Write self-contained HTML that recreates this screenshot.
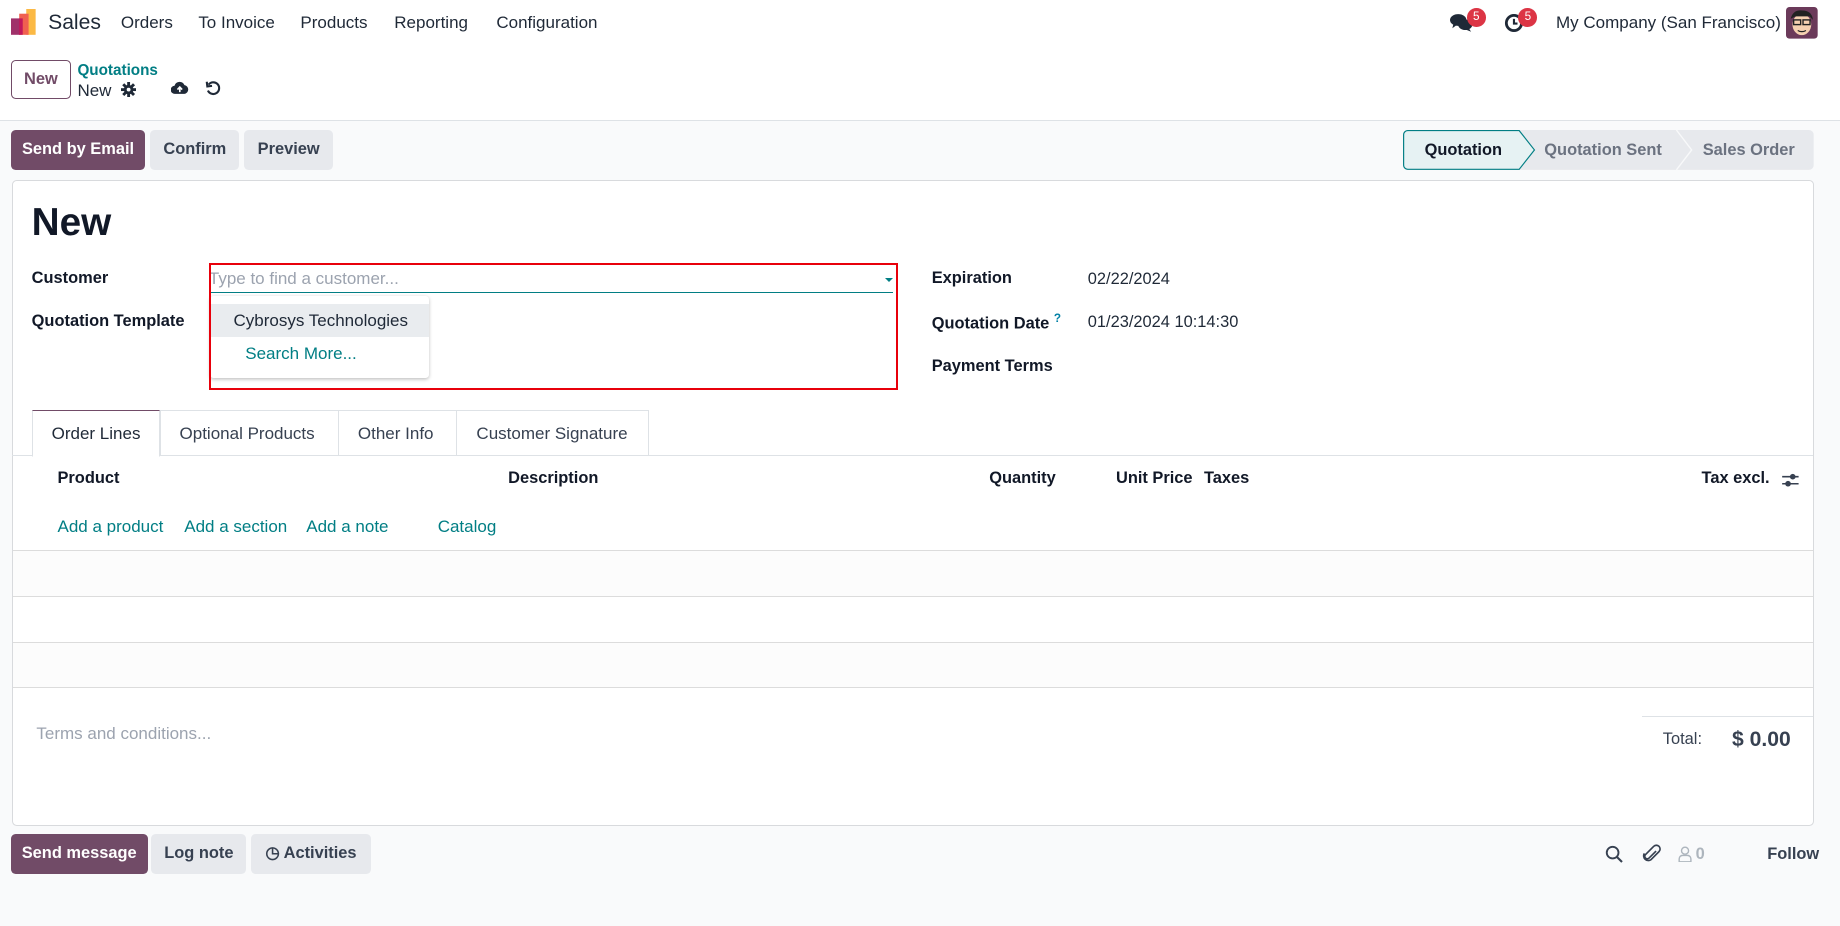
<!DOCTYPE html>
<html><head><meta charset="utf-8"><style>
html,body{margin:0;padding:0;width:1840px;height:926px;overflow:hidden;background:#f9fafb}
#w{zoom:1.173469;width:1568px;height:789px;position:relative;font-family:"Liberation Sans",sans-serif;font-size:14px;color:#1f2937}
.a{position:absolute;white-space:nowrap}
.b{font-weight:bold}
.t{color:#017e84}
.btn{position:absolute;height:34px;line-height:34px;text-align:center;border-radius:4px;font-weight:bold;font-size:14px}
.p{background:#714B67;color:#fff}
.g{background:#e7e9ed;color:#374151}
.lbl{font-weight:bold;color:#111827}
</style></head><body><div id="w">
<!-- top white area -->
<div class="a" style="left:0;top:0;width:1568px;height:102px;background:#fff;border-bottom:1px solid #dee2e6"></div>
<!-- logo -->
<svg class="a" style="left:9px;top:8px" width="22" height="22" viewBox="0 0 22 22"><rect x="13" y="0" width="8" height="22" fill="#fbb945"/><rect x="7" y="4" width="8" height="18" fill="#f06050"/><rect x="0" y="8" width="8" height="14" fill="#a0316a"/><rect x="7" y="8" width="3" height="14" fill="#c2185b"/></svg>
<div class="a" style="left:41px;top:9px;font-size:18px;color:#1f2937">Sales</div>
<div class="a" style="left:103px;top:11px;font-size:14.5px">Orders</div>
<div class="a" style="left:169px;top:11px;font-size:14.5px">To Invoice</div>
<div class="a" style="left:256px;top:11px;font-size:14.5px">Products</div>
<div class="a" style="left:336px;top:11px;font-size:14.5px">Reporting</div>
<div class="a" style="left:423px;top:11px;font-size:14.5px">Configuration</div>
<!-- chat icon -->
<svg class="a" style="left:1236px;top:11px" width="20" height="17" viewBox="0 0 20 17"><ellipse cx="7" cy="6" rx="7" ry="5" fill="#1f2937"/><path d="M3 9 L2 13 L6 10Z" fill="#1f2937"/><ellipse cx="13" cy="10" rx="6" ry="4.5" fill="#1f2937"/><path d="M16 13 L18 16 L13 14Z" fill="#1f2937"/></svg>
<div class="a" style="left:1250px;top:7px;width:16px;height:16px;border-radius:8px;background:#dc3545;color:#fff;font-size:10px;text-align:center;line-height:16px">5</div>
<svg class="a" style="left:1282px;top:11px" width="17" height="17" viewBox="0 0 17 17"><circle cx="8.5" cy="8.5" r="6.5" fill="none" stroke="#1f2937" stroke-width="2.4"/><path d="M8.5 5v4h3" fill="none" stroke="#1f2937" stroke-width="1.8"/></svg>
<div class="a" style="left:1294px;top:7px;width:16px;height:16px;border-radius:8px;background:#dc3545;color:#fff;font-size:10px;text-align:center;line-height:16px">5</div>
<div class="a" style="left:1326px;top:11px;font-size:14.5px">My Company (San Francisco)</div>
<svg class="a" style="left:1522px;top:6px" width="27" height="27" viewBox="0 0 27 27"><rect width="27" height="27" rx="3" fill="#6b3a5a"/><ellipse cx="13.5" cy="15" rx="8" ry="9" fill="#f5d0b0"/><path d="M4 10 Q6 2 14 3 Q22 3 23 11 L20 8 L8 8Z" fill="#222"/><rect x="6.5" y="11" width="6" height="4" fill="none" stroke="#222" stroke-width="1.2"/><rect x="14.5" y="11" width="6" height="4" fill="none" stroke="#222" stroke-width="1.2"/><path d="M10 20 Q13.5 22 17 20" stroke="#222" fill="none"/></svg>
<!-- control panel -->
<div class="a" style="left:9px;top:51px;width:50px;height:32px;border:1px solid #714B67;border-radius:4px;color:#714B67;font-weight:bold;text-align:center;line-height:32px;font-size:14px">New</div>
<div class="a b t" style="left:66px;top:53px;font-size:13px">Quotations</div>
<div class="a" style="left:66px;top:69px;font-size:14.5px">New</div>
<svg class="a" style="left:103px;top:70px" width="13" height="13" viewBox="0 0 16 16"><g fill="#1f2937"><circle cx="8" cy="8" r="5"/><rect x="6.5" y="0" width="3" height="16"/><rect x="0" y="6.5" width="16" height="3"/><rect x="6.5" y="0" width="3" height="16" transform="rotate(45 8 8)"/><rect x="6.5" y="0" width="3" height="16" transform="rotate(-45 8 8)"/></g><circle cx="8" cy="8" r="2" fill="#fff"/></svg>
<svg class="a" style="left:146px;top:69px" width="15" height="12" viewBox="0 0 15 12"><path d="M3.5 11 A3.5 3.5 0 0 1 3 4 A4.5 4.5 0 0 1 11.5 3.5 A3.8 3.8 0 0 1 11.5 11Z" fill="#1f2937"/><path d="M7.5 9.5V5.5M5.5 7.3L7.5 5.2L9.5 7.3" stroke="#fff" stroke-width="1.4" fill="none"/></svg>
<svg class="a" style="left:175px;top:68px" width="14" height="14" viewBox="0 0 14 14"><path d="M3 4 A5 5 0 1 1 2.5 9" fill="none" stroke="#1f2937" stroke-width="1.8"/><path d="M1.5 1.5 L2 5.5 L6 5" fill="none" stroke="#1f2937" stroke-width="1.8"/></svg>
<!-- action buttons -->
<div class="btn p" style="left:9px;top:111px;width:115px">Send by Email</div>
<div class="btn g" style="left:128px;top:111px;width:76px">Confirm</div>
<div class="btn g" style="left:208px;top:111px;width:76px">Preview</div>
<!-- statusbar -->
<svg class="a" style="left:1196px;top:111px" width="350" height="34" viewBox="0 0 350 34"><rect x="0" y="0" width="350" height="34" rx="4" fill="#e7e9ed"/><path d="M4 0.5 H99 L112 17 L99 33.5 H4 A3.5 3.5 0 0 1 0.5 30 V4 A3.5 3.5 0 0 1 4 0.5Z" fill="#e6f2f3" stroke="#017e84"/><path d="M233 0 L246 17 L233 34" fill="none" stroke="#f8f9fa" stroke-width="1.2"/></svg>
<div class="a b" style="left:1214px;top:120px;color:#111827">Quotation</div>
<div class="a b" style="left:1316px;top:120px;color:#6b7280">Quotation Sent</div>
<div class="a b" style="left:1451px;top:120px;color:#6b7280">Sales Order</div>
<!-- card -->
<div class="a" style="left:10px;top:153px;width:1534px;height:549px;background:#fff;border:1px solid #d8dadd;border-radius:4px"></div>
<div class="a b" style="left:27px;top:171px;font-size:33px;color:#111827">New</div>
<div class="a lbl" style="left:27px;top:229px">Customer</div>
<div class="a lbl" style="left:27px;top:266px">Quotation Template</div>
<div class="a" style="left:178px;top:229px;color:#9ca3af;font-size:14.5px">Type to find a customer...</div>
<div class="a" style="left:178px;top:249px;width:583px;height:1px;background:#017e84"></div>
<div class="a" style="left:754px;top:237px;width:0;height:0;border-left:3.5px solid transparent;border-right:3.5px solid transparent;border-top:4px solid #017e84"></div>
<div class="a" style="left:179px;top:252px;width:187px;height:70px;background:#fff;border-radius:3px;box-shadow:0 1px 3px rgba(0,0,0,.25)"></div>
<div class="a" style="left:179px;top:259px;width:187px;height:28px;background:#e9ecef"></div>
<div class="a" style="left:199px;top:265px;font-size:14.5px">Cybrosys Technologies</div>
<div class="a t" style="left:209px;top:293px;font-size:14.5px">Search More...</div>
<div class="a" style="left:178px;top:224px;width:584px;height:105px;border:2px solid #e8000b"></div>
<div class="a lbl" style="left:794px;top:229px">Expiration</div>
<div class="a" style="left:927px;top:230px">02/22/2024</div>
<div class="a lbl" style="left:794px;top:266px">Quotation Date <sup style="color:#0180a5;font-size:10px">?</sup></div>
<div class="a" style="left:927px;top:267px">01/23/2024 10:14:30</div>
<div class="a lbl" style="left:794px;top:304px">Payment Terms</div>
<!-- tabs -->
<div class="a" style="left:10px;top:388px;width:1535px;height:1px;background:#dee2e6"></div>
<div class="a" style="left:27px;top:349px;width:108px;height:39px;border:1px solid #dee2e6;border-top:1px solid #714B67;border-bottom:1px solid #fff;background:#fff"></div>
<div class="a" style="left:136px;top:349px;width:151px;height:38px;border:1px solid #dee2e6;border-bottom:0"></div>
<div class="a" style="left:288px;top:349px;width:100px;height:38px;border:1px solid #dee2e6;border-bottom:0"></div>
<div class="a" style="left:389px;top:349px;width:162px;height:38px;border:1px solid #dee2e6;border-bottom:0"></div>
<div class="a" style="left:44px;top:361px;font-size:14.5px">Order Lines</div>
<div class="a" style="left:153px;top:361px;font-size:14.5px;color:#374151">Optional Products</div>
<div class="a" style="left:305px;top:361px;font-size:14.5px;color:#374151">Other Info</div>
<div class="a" style="left:406px;top:361px;font-size:14.5px;color:#374151">Customer Signature</div>
<!-- table -->
<div class="a lbl" style="left:49px;top:400px">Product</div>
<div class="a lbl" style="left:433px;top:400px">Description</div>
<div class="a lbl" style="left:843px;top:400px">Quantity</div>
<div class="a lbl" style="left:951px;top:400px">Unit Price</div>
<div class="a lbl" style="left:1026px;top:400px">Taxes</div>
<div class="a lbl" style="left:1450px;top:400px">Tax excl.</div>
<svg class="a" style="left:1518px;top:402px" width="16" height="14" viewBox="0 0 16 14"><path d="M1 4H15M1 10H15" stroke="#374151" stroke-width="1.3"/><circle cx="10" cy="4" r="2.4" fill="#374151"/><circle cx="6" cy="10" r="2.4" fill="#374151"/></svg>
<div class="a t" style="left:49px;top:441px;font-size:14.5px">Add a product</div>
<div class="a t" style="left:157px;top:441px;font-size:14.5px">Add a section</div>
<div class="a t" style="left:261px;top:441px;font-size:14.5px">Add a note</div>
<div class="a t" style="left:373px;top:441px;font-size:14.5px">Catalog</div>
<div class="a" style="left:11px;top:469px;width:1534px;height:38px;background:#fcfcfc;border-top:1px solid #dcdcdc;border-bottom:1px solid #dcdcdc"></div>
<div class="a" style="left:11px;top:547px;width:1534px;height:38px;background:#fcfcfc;border-top:1px solid #dcdcdc;border-bottom:1px solid #dcdcdc"></div>
<div class="a" style="left:31px;top:617px;color:#9ca3af;font-size:14.5px">Terms and conditions...</div>
<div class="a" style="left:1399px;top:610px;width:146px;height:1px;background:#dee2e6"></div>
<div class="a" style="left:1417px;top:622px;color:#374151">Total:</div>
<div class="a b" style="left:1476px;top:620px;font-size:18px;color:#374151">$ 0.00</div>
<!-- chatter -->
<div class="btn p" style="left:9px;top:711px;width:117px">Send message</div>
<div class="btn g" style="left:129px;top:711px;width:81px">Log note</div>
<div class="btn g" style="left:214px;top:711px;width:102px">&#9719; Activities</div>
<svg class="a" style="left:1368px;top:720px" width="16" height="16" viewBox="0 0 16 16"><circle cx="6.5" cy="6.5" r="5" fill="none" stroke="#374151" stroke-width="1.6"/><path d="M10 10L14.5 14.5" stroke="#374151" stroke-width="1.8"/></svg>
<svg class="a" style="left:1399px;top:719px" width="17" height="17" viewBox="0 0 17 17"><path d="M12 6 L6 12 A2 2 0 0 1 3 9 L10 2 A3 3 0 0 1 14.5 6.5 L7.5 13.5 A4 4 0 0 1 2 8" fill="none" stroke="#374151" stroke-width="1.4"/></svg>
<svg class="a" style="left:1430px;top:721px" width="12" height="14" viewBox="0 0 12 14"><circle cx="6" cy="4" r="3" fill="none" stroke="#adb5bd" stroke-width="1.2"/><path d="M1 13.5 V11 A3 3 0 0 1 4 8 H8 A3 3 0 0 1 11 11 V13.5Z" fill="none" stroke="#adb5bd" stroke-width="1.2"/></svg>
<div class="a b" style="left:1445px;top:720px;color:#adb5bd">0</div>
<div class="a b" style="left:1506px;top:720px;color:#374151">Follow</div>
</div></body></html>
